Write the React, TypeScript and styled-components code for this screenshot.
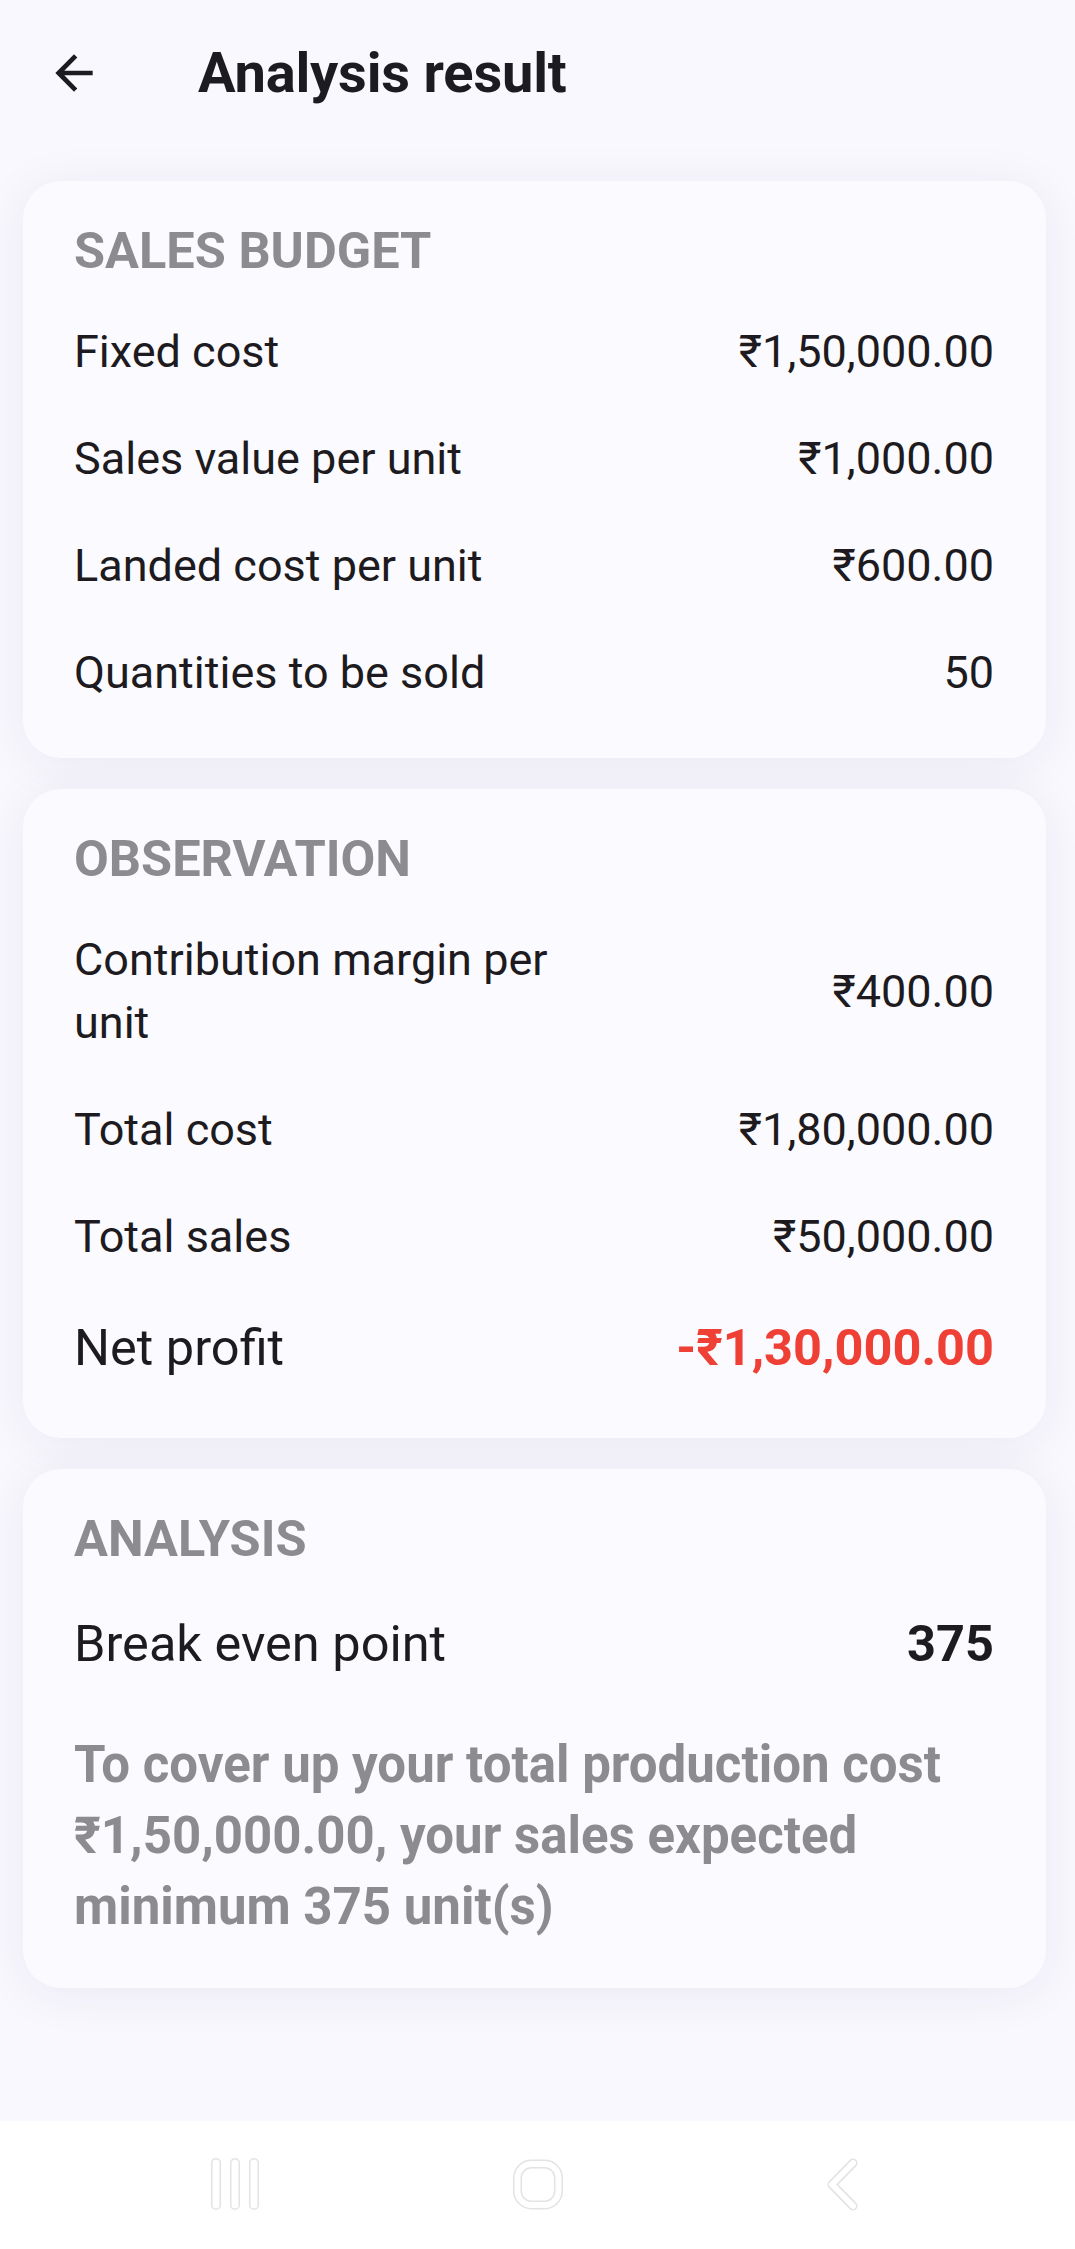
import React from "react";
import styled, { createGlobalStyle } from "styled-components";

const GlobalStyle = createGlobalStyle`
  html, body {
    margin: 0;
    padding: 0;
    background: #f9f8fe;
  }
  body {
    font-family: Roboto, "Noto Sans", "DejaVu Sans", sans-serif;
    -webkit-font-smoothing: antialiased;
  }
`;

type Item = {
  label: string;
  value: string;
  big?: boolean;
  danger?: boolean;
  strong?: boolean;
};

const budget: Item[] = [
  { label: "Fixed cost", value: "₹1,50,000.00" },
  { label: "Sales value per unit", value: "₹1,000.00" },
  { label: "Landed cost per unit", value: "₹600.00" },
  { label: "Quantities to be sold", value: "50" },
];

const observation: Item[] = [
  { label: "Contribution margin per unit", value: "₹400.00" },
  { label: "Total cost", value: "₹1,80,000.00" },
  { label: "Total sales", value: "₹50,000.00" },
  { label: "Net profit", value: "-₹1,30,000.00", big: true, danger: true, strong: true },
];

const analysis: Item[] = [
  { label: "Break even point", value: "375", big: true, strong: true },
];

const App = () => {
  return (
    <>
      <GlobalStyle />
      <Page>
        <Header>
          <BackButton aria-label="Back">
            <svg width="56" height="56" viewBox="0 0 24 24">
              <path
                d="M20 11H7.83l5.59-5.59L12 4l-8 8 8 8 1.41-1.41L7.83 13H20v-2z"
                fill="#1b1b21"
              />
            </svg>
          </BackButton>
          <Title>Analysis result</Title>
        </Header>

        <Content>
          <Card>
            <CardTitle>SALES BUDGET</CardTitle>
            {budget.map((item) => (
              <Row key={item.label} item={item} />
            ))}
          </Card>

          <Card>
            <CardTitle>OBSERVATION</CardTitle>
            {observation.map((item) => (
              <Row key={item.label} item={item} />
            ))}
          </Card>

          <Card>
            <CardTitle>ANALYSIS</CardTitle>
            {analysis.map((item) => (
              <Row key={item.label} item={item} />
            ))}
            <Note>
              To cover up your total production cost ₹1,50,000.00, your sales
              expected minimum 375 unit(s)
            </Note>
          </Card>
        </Content>

        <NavBar>
          <NavIcon>
            <svg width="60" height="60" viewBox="0 0 60 60">
              {[11, 30, 49].map((x) => (
                <g key={x}>
                  <line x1={x} y1="8" x2={x} y2="50" stroke="#e3e3e3" strokeWidth="10" strokeLinecap="round" />
                  <line x1={x} y1="8" x2={x} y2="50" stroke="#ffffff" strokeWidth="7" strokeLinecap="round" />
                </g>
              ))}
            </svg>
          </NavIcon>
          <NavIcon>
            <svg width="60" height="60" viewBox="0 0 60 60">
              <rect x="9.5" y="9" width="41" height="41" rx="14" fill="none" stroke="#e3e3e3" strokeWidth="9" />
              <rect x="9.5" y="9" width="41" height="41" rx="14" fill="none" stroke="#ffffff" strokeWidth="6" />
            </svg>
          </NavIcon>
          <NavIcon>
            <svg width="60" height="60" viewBox="0 0 60 60">
              <path d="M42 8 L21 29.5 L42 51" fill="none" stroke="#e3e3e3" strokeWidth="9" strokeLinecap="round" strokeLinejoin="round" />
              <path d="M42 8 L21 29.5 L42 51" fill="none" stroke="#ffffff" strokeWidth="6" strokeLinecap="round" strokeLinejoin="round" />
            </svg>
          </NavIcon>
        </NavBar>
      </Page>
    </>
  );
};

const Row = ({ item }: { item: Item }) => (
  <RowWrap>
    <Label $big={item.big}>{item.label}</Label>
    <Value $big={item.big} $danger={item.danger} $strong={item.strong}>
      {item.value}
    </Value>
  </RowWrap>
);

const Page = styled.div`
  display: flex;
  flex-direction: column;
  min-height: 2249px;
  background: #f9f8fe;
`;

const Header = styled.header`
  display: flex;
  align-items: center;
  height: 146px;
  padding-left: 46px;
  gap: 96px;
  background: #f9f8fe;
  position: relative;
  z-index: 1;
`;

const BackButton = styled.button`
  display: flex;
  align-items: center;
  justify-content: center;
  width: 56px;
  height: 56px;
  padding: 0;
  border: none;
  background: transparent;
`;

const Title = styled.h1`
  margin: 0;
  font-size: 56px;
  font-weight: 700;
  color: #1b1b21;
  letter-spacing: -0.2px;
`;

const Content = styled.main`
  flex: 1;
  display: flex;
  flex-direction: column;
  gap: 31px;
  padding: 35px 29px 0 23px;
`;

const Card = styled.section`
  display: flex;
  flex-direction: column;
  padding: 38px 52px 32px 51px;
  background: #fbfaff;
  border-radius: 38px;
  box-shadow: 0 6px 50px rgba(40, 30, 80, 0.07);
`;

const CardTitle = styled.h2`
  margin: 0 0 15px;
  font-size: 50.5px;
  line-height: 64px;
  font-weight: 700;
  color: #8c8b90;
`;

const RowWrap = styled.div`
  display: flex;
  align-items: center;
  justify-content: space-between;
  gap: 24px;
  padding: 22px 0;
`;

const Label = styled.span<{ $big?: boolean }>`
  max-width: 510px;
  font-size: ${(p) => (p.$big ? "50.5px" : "45px")};
  line-height: ${(p) => (p.$big ? "72px" : "63px")};
  font-weight: 400;
  color: #1d1b20;
`;

const Value = styled.span<{ $big?: boolean; $danger?: boolean; $strong?: boolean }>`
  text-align: right;
  white-space: nowrap;
  font-size: ${(p) => (p.$big ? "50.5px" : "45px")};
  line-height: ${(p) => (p.$big ? "72px" : "63px")};
  font-weight: ${(p) => (p.$strong ? 700 : 400)};
  color: ${(p) => (p.$danger ? "#ee4034" : "#1d1b20")};
`;

const Note = styled.p`
  margin: 27px 0 14px;
  font-size: 51px;
  line-height: 71px;
  font-weight: 700;
  color: #8c8b90;
`;

const NavBar = styled.nav`
  display: flex;
  align-items: center;
  justify-content: center;
  gap: 243px;
  height: 128px;
  margin-top: 130px;
  background: #ffffff;
`;

const NavIcon = styled.div`
  display: flex;
  align-items: center;
  justify-content: center;
  width: 60px;
  height: 60px;
`;

export default App;
